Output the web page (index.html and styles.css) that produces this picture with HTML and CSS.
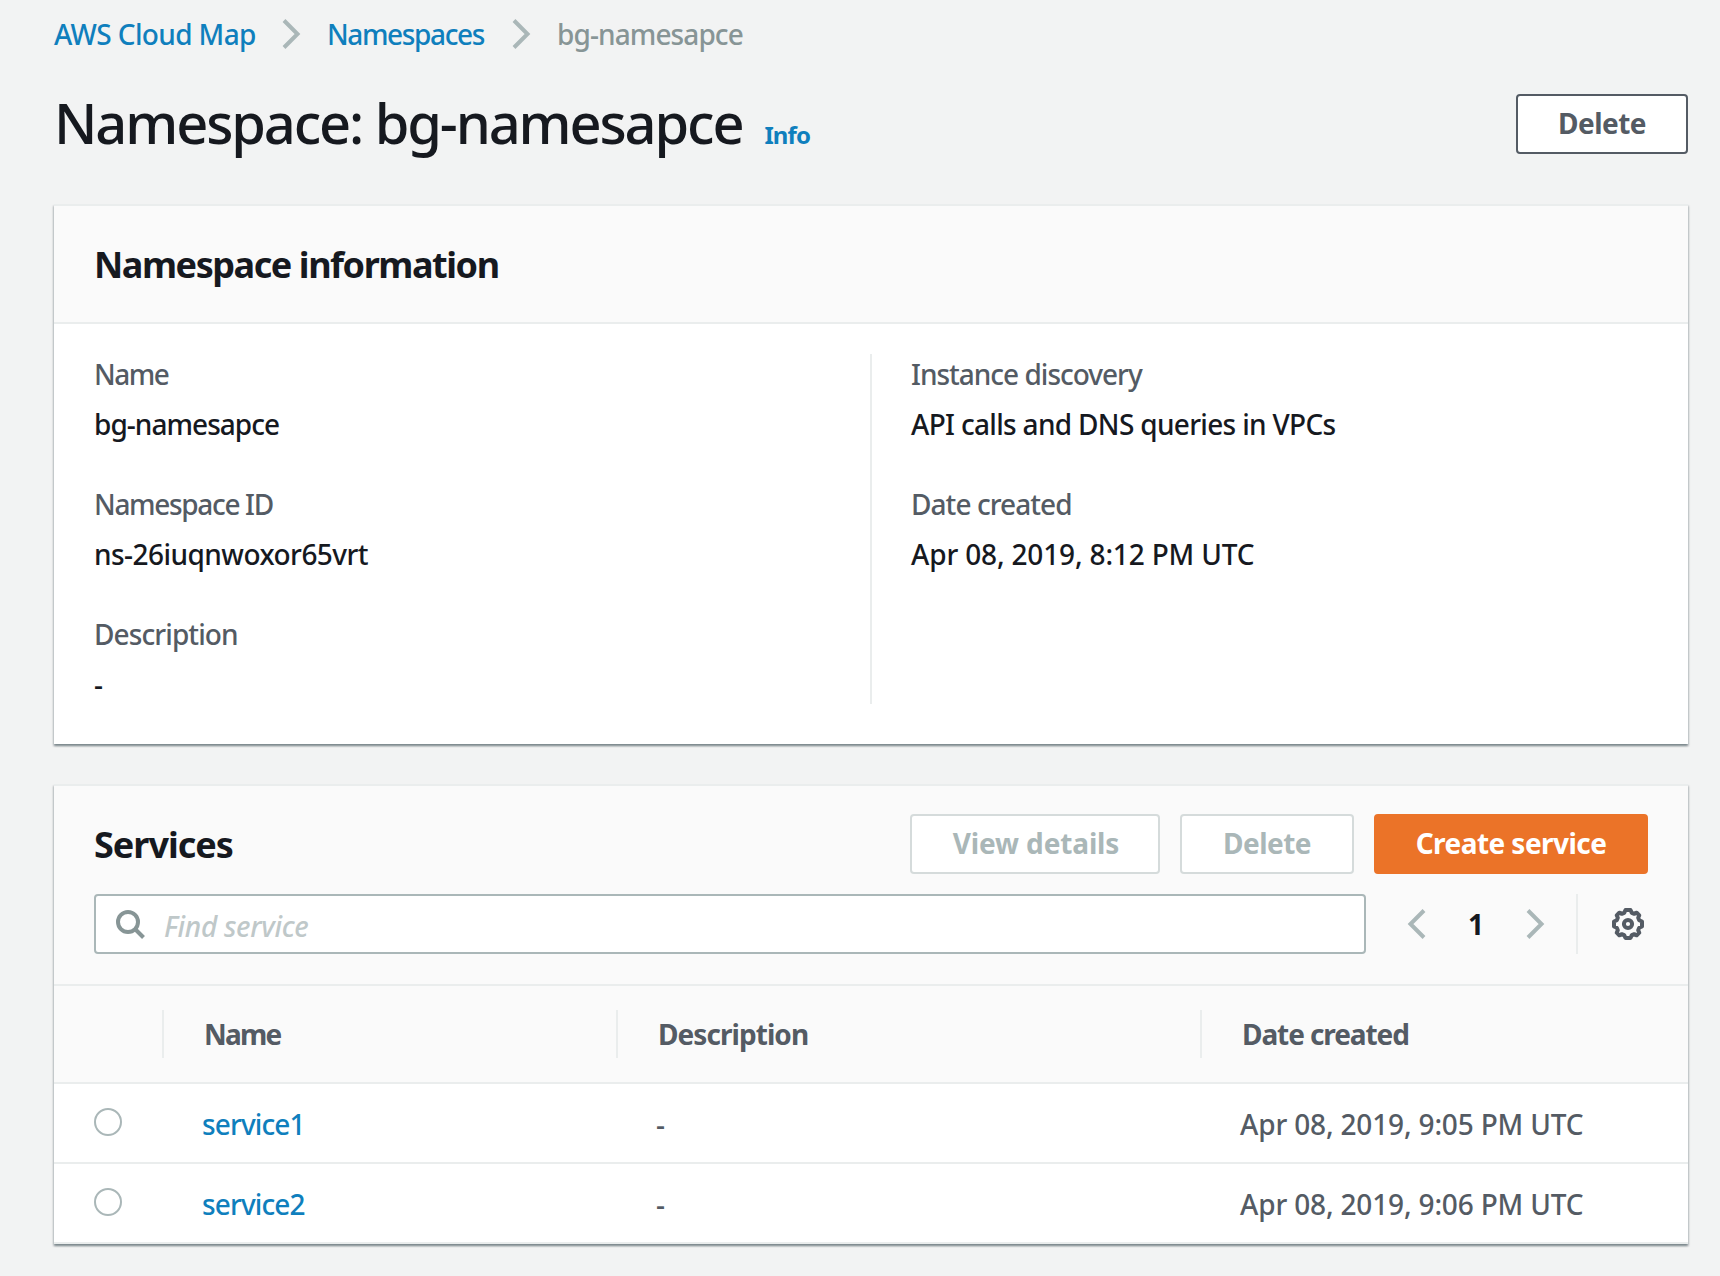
FILE: index.html
```html
<!DOCTYPE html>
<html lang="en">
<head>
<meta charset="utf-8">
<title>AWS Cloud Map - bg-namesapce</title>
<link rel="stylesheet" href="styles.css">
</head>
<body>
<main class="page">
  <nav class="breadcrumb">
    <a class="link crumb-root" href="#">AWS Cloud Map</a>
    <svg class="chevron" viewBox="0 0 20 32"><path d="M3 2.500 16.500 16 3 29.500"/></svg>
    <a class="link crumb-parent" href="#">Namespaces</a>
    <svg class="chevron" viewBox="0 0 20 32"><path d="M3 2.500 16.500 16 3 29.500"/></svg>
    <span class="crumb-current">bg-namesapce</span>
  </nav>

  <header class="page-header">
    <h1 class="title">Namespace: bg-namesapce</h1>
    <a class="link info" href="#">Info</a>
    <button class="button delete">Delete</button>
  </header>

  <section class="card details">
    <div class="card-header"><h2 class="heading-info">Namespace information</h2></div>
    <div class="details-body">
      <dl class="column">
        <div class="pair"><dt class="t-name">Name</dt><dd class="t-bg">bg-namesapce</dd></div>
        <div class="pair"><dt class="t-id">Namespace ID</dt><dd class="t-ns">ns-26iuqnwoxor65vrt</dd></div>
        <div class="pair"><dt class="t-desc">Description</dt><dd>-</dd></div>
      </dl>
      <dl class="column column-right">
        <div class="pair"><dt class="t-discovery">Instance discovery</dt><dd class="t-api">API calls and DNS queries in VPCs</dd></div>
        <div class="pair"><dt class="t-created">Date created</dt><dd class="t-date">Apr 08, 2019, 8:12 PM UTC</dd></div>
      </dl>
    </div>
  </section>

  <section class="card services">
    <div class="services-header">
      <div class="toolbar">
        <h2 class="heading-services">Services</h2>
        <button class="button view-details" disabled>View details</button>
        <button class="button delete-service" disabled>Delete</button>
        <button class="button primary">Create service</button>
      </div>
      <div class="filter">
        <label class="search">
          <svg class="search-icon" viewBox="0 0 32 32"><circle cx="14" cy="14" r="10"/><path d="M21 21 29.500 29.500"/></svg>
          <input type="text" placeholder="Find service">
        </label>
        <div class="pager">
          <svg class="chevron" viewBox="0 0 20 32"><path d="M17 2.500 3.500 16 17 29.500"/></svg>
          <span class="page-number">1</span>
          <svg class="chevron" viewBox="0 0 20 32"><path d="M3 2.500 16.500 16 3 29.500"/></svg>
        </div>
        <div class="settings">
          <svg class="gear" viewBox="-16 -16 32 32"><path d="M-2.500 -14H2.500L3.800 -11.200 6.200 -10.200 8.700 -11.300 11.300 -8.700 10.200 -6.200 11.200 -3.800 14 -2.500V2.500L11.200 3.800 10.200 6.200 11.300 8.700 8.700 11.300 6.200 10.200 3.800 11.200 2.500 14H-2.500L-3.800 11.200 -6.200 10.200 -8.700 11.300 -11.300 8.700 -10.200 6.200 -11.200 3.800 -14 2.500V-2.500L-11.200 -3.800 -10.200 -6.200 -11.300 -8.700 -8.700 -11.300 -6.200 -10.200 -3.800 -11.200Z"/><circle r="4.100"/></svg>
        </div>
      </div>
    </div>
    <div class="row head">
      <div class="cell"></div>
      <div class="cell th-name">Name</div>
      <div class="cell th-desc">Description</div>
      <div class="cell th-date">Date created</div>
    </div>
    <div class="row">
      <div class="cell"><span class="radio"></span></div>
      <div class="cell"><a class="link t-service" href="#">service1</a></div>
      <div class="cell">-</div>
      <div class="cell t-date">Apr 08, 2019, 9:05 PM UTC</div>
    </div>
    <div class="row">
      <div class="cell"><span class="radio"></span></div>
      <div class="cell"><a class="link t-service" href="#">service2</a></div>
      <div class="cell">-</div>
      <div class="cell t-date">Apr 08, 2019, 9:06 PM UTC</div>
    </div>
  </section>
</main>
</body>
</html>
```
FILE: styles.css
```css
* { box-sizing: border-box; }

body {
  margin: 0;
  background: #f2f3f3;
  color: #16191f;
  font: 500 28px/44px "Noto Sans", "Open Sans", sans-serif;
}

h1, h2, dl, dd { margin: 0; }

.page {
  height: 1276px;
  padding: 12px 32px 0 54px;
  overflow: hidden;
  white-space: nowrap;
}

.link { color: #0f7fbd; text-decoration: none; }

.chevron {
  flex: none;
  width: 20px;
  height: 32px;
  fill: none;
  stroke: #aab7b8;
  stroke-width: 4;
}

/* Breadcrumb */
.breadcrumb { display: flex; align-items: center; height: 44px; }
.crumb-root { width: 227px; letter-spacing: -.63px; }
.crumb-parent { width: 184px; margin-left: 26px; letter-spacing: -1.38px; }
.crumb-current { margin-left: 26px; color: #879596; letter-spacing: -.9px; }

/* Page header */
.page-header { display: flex; align-items: baseline; margin-top: 28px; height: 120px; }
.title { font-size: 56px; font-weight: 500; line-height: 76px; letter-spacing: -2.13px; }
.info { margin-left: 22px; font-size: 24px; font-weight: 700; letter-spacing: -.9px; }

.button {
  height: 60px;
  padding: 0 0 2px;
  border: 2px solid #545b64;
  border-radius: 4px;
  background: #fff;
  color: #545b64;
  font: 700 28px/38px "Noto Sans", "Open Sans", sans-serif;
  letter-spacing: -.55px;
}
.button:disabled { border-color: #d5dbdb; color: #aab7b8; }
.delete { align-self: flex-start; width: 172px; margin: 10px 0 0 auto; }

/* Cards */
.card {
  border-top: 2px solid #eaeded;
  background: #fff;
  box-shadow: 0 2px 2px rgba(0, 28, 36, .3), 1px 2px 2px rgba(0, 28, 36, .15), -1px 2px 2px rgba(0, 28, 36, .15);
}
.card-header {
  display: flex;
  align-items: center;
  height: 118px;
  padding: 1px 0 0 40px;
  border-bottom: 2px solid #eaeded;
  background: #fafafa;
}
h2 { font-size: 36px; font-weight: 700; line-height: 49px; }
.heading-info { letter-spacing: -1.44px; }
.heading-services { margin-right: auto; letter-spacing: -1px; }

/* Details */
.details-body { display: grid; grid-template-columns: 816px 1fr; height: 420px; padding: 30px 0 40px; }
.column { padding: 1px 0 0 40px; }
.column-right { padding-left: 39px; border-left: 2px solid #eaeded; }
.column, .column-right { height: 350px; }
.pair + .pair { margin-top: 39px; }
dt { color: #545b64; line-height: 38px; }
dd { margin-top: 9px; line-height: 44px; }

/* Services */
.services { margin-top: 40px; }
.services-header { height: 200px; padding: 28px 40px 0; border-bottom: 2px solid #eaeded; background: #fafafa; }
.toolbar { display: flex; align-items: center; gap: 20px; height: 60px; }
.view-details { width: 250px; padding-left: 2px; letter-spacing: -.13px; }
.delete-service { width: 174px; }
.primary { width: 274px; border-color: #eb7328; background: #eb7328; color: #fff; letter-spacing: -.55px; }

.filter { display: flex; height: 60px; margin-top: 20px; }
.search {
  display: flex;
  align-items: center;
  width: 1272px;
  padding-left: 18px;
  border: 2px solid #aab7b8;
  border-radius: 4px;
  background: #fff;
}
.search-icon { width: 32px; height: 32px; fill: none; stroke: #879596; stroke-width: 4; }
.search input {
  flex: 1;
  margin: 3px 0 0 18px;
  padding: 0;
  border: 0;
  outline: 0;
  background: none;
  font: italic 500 28px/44px "Noto Sans", "Open Sans", sans-serif;
  letter-spacing: -.3px;
}
.search input::placeholder { color: #bfc8c9; opacity: 1; }
.pager { display: flex; align-items: center; justify-content: space-between; width: 138px; margin-left: 41px; }
.page-number { font-weight: 700; margin-top: -1px; }
.settings { display: flex; align-items: center; margin-left: 31px; padding-left: 34px; border-left: 2px solid #eaeded; }
.gear { width: 32px; height: 32px; fill: none; stroke: #545b64; stroke-width: 4; stroke-linejoin: round; }

/* Table */
.row {
  display: grid;
  grid-template-columns: 110px 454px 584px 1fr;
  align-items: center;
  height: 80px;
  border-bottom: 2px solid #eaeded;
  color: #545b64;
}
.cell { padding: 2px 0 0 38px; }
.cell:first-child { padding: 0 0 0 40px; }
.head { height: 98px; background: #fafafa; font-weight: 700; }
.head .cell { height: 48px; padding: 0 0 0 40px; border-right: 2px solid #eaeded; line-height: 48px; }
.head .cell:last-child { border-right: 0; }
.radio { display: block; width: 28px; height: 28px; margin-top: -2px; border: 2px solid #aab7b8; border-radius: 50%; background: #fff; }

/* Tracking */
.t-name { letter-spacing: -1.5px; }
.t-bg { letter-spacing: -.96px; }
.t-id { letter-spacing: -1.33px; }
.t-ns { letter-spacing: -.54px; }
.t-desc { letter-spacing: -.9px; }
.t-discovery { letter-spacing: -1px; }
.t-api { letter-spacing: -.68px; }
.t-created { letter-spacing: -.93px; }
.t-date { letter-spacing: -.16px; }
.t-service { letter-spacing: -.88px; }
.th-name { letter-spacing: -1.8px; }
.th-desc { letter-spacing: -.94px; }
.th-date { letter-spacing: -1.09px; }
```
